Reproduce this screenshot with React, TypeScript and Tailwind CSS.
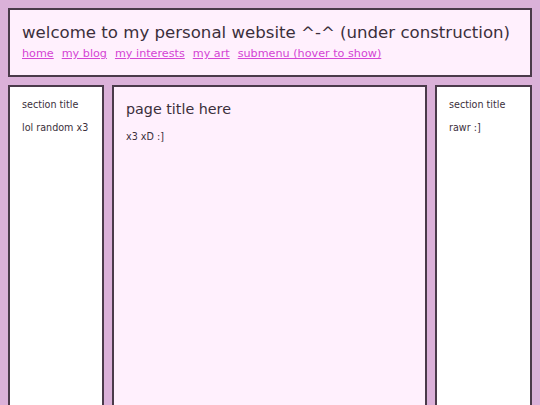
export default function App() {
  const links = ["home", "my blog", "my interests", "my art", "submenu (hover to show)"];
  return (
    <div className="min-h-screen bg-[#dbb1d9] p-2 text-[#3b2f3b]" style={{ fontFamily: '"DejaVu Sans", sans-serif' }}>
      <header className="border-2 border-[#4a3a4a] bg-[#fff0fd] px-[12px] pt-[11px] pb-[13px]">
        <h1 className="text-[16.6px] leading-[24px]">welcome to my personal website ^-^ (under construction)</h1>
        <nav className="mt-[1px] flex gap-[8px] text-[11.2px] leading-[16px]">
          {links.map((l) => (
            <a key={l} href="#" className="text-[#d444d4] underline">{l}</a>
          ))}
        </nav>
      </header>
      <div className="mt-2 flex gap-2">
        <aside className="w-[96px] h-[400px] shrink-0 border-2 border-[#4a3a4a] bg-white px-[12px] pt-[11px] text-[9.6px]">
          <div className="leading-[14px]">section title</div>
          <div className="mt-[9px] leading-[14px]">lol random x3</div>
        </aside>
        <main className="flex-1 h-[400px] border-2 border-[#4a3a4a] bg-[#fff0fd] px-[12px] pt-[12px]">
          <h2 className="text-[14.3px] leading-[20px]">page title here</h2>
          <p className="mt-[11px] text-[9.6px] leading-[14px]">x3 xD :]</p>
        </main>
        <aside className="w-[97px] h-[400px] shrink-0 border-2 border-[#4a3a4a] bg-white px-[12px] pt-[11px] text-[9.6px]">
          <div className="leading-[14px]">section title</div>
          <div className="mt-[9px] leading-[14px]">rawr :]</div>
        </aside>
      </div>
    </div>
  );
}
